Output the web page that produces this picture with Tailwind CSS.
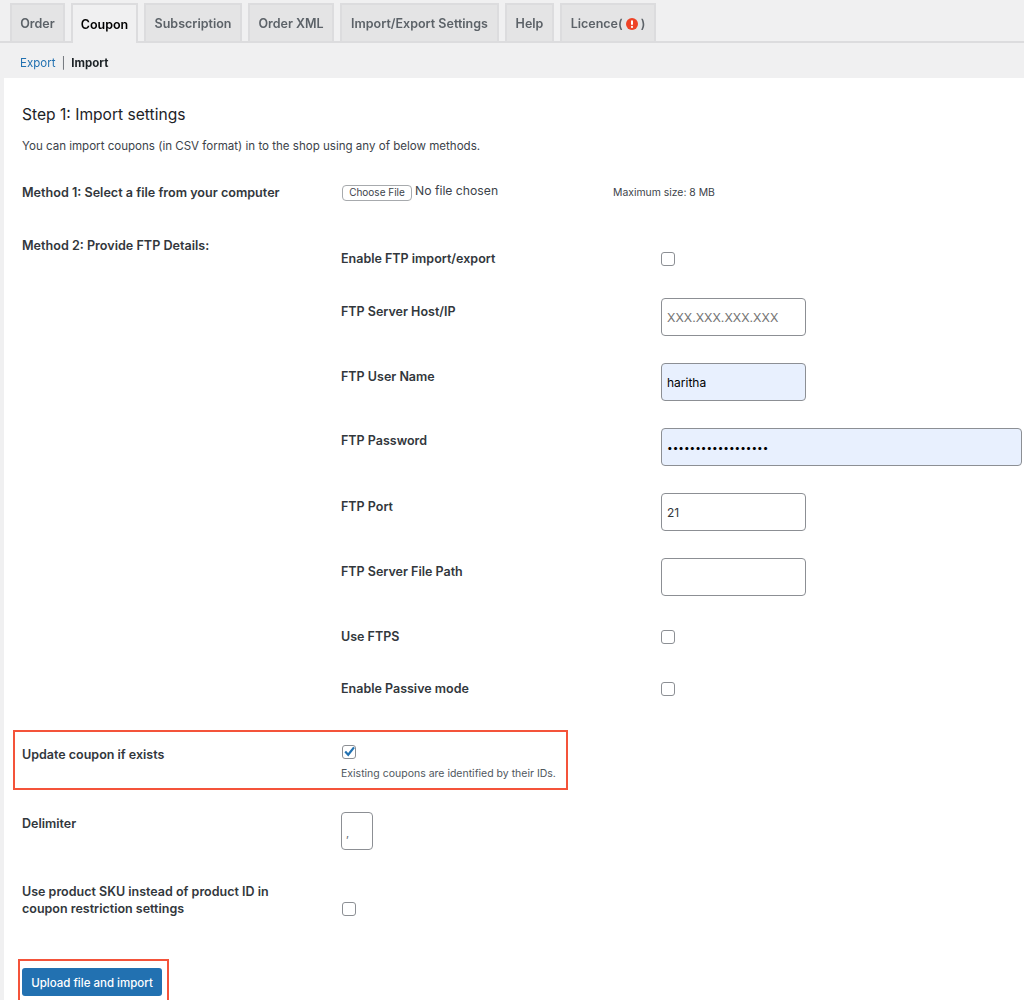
<!doctype html>
<html lang="en">
<head>
<meta charset="utf-8">
<script src="https://cdn.jsdelivr.net/npm/@tailwindcss/browser@4"></script>
<title>Import coupons</title>
</head>
<body class="bg-[#f0f0f1] font-['Inter','Liberation_Sans',sans-serif] text-[13px] text-[#32373c] h-[1000px] overflow-hidden">
 <div class="blur-[0.35px]">
  <nav class="flex items-end gap-[6px] h-[43px] pl-[10px] border-b-2 border-[#dcdcde] font-semibold leading-[20px] text-[#5c6268] text-[12.5px]">
    <a class="h-[38px] w-[55px] pt-[2px] flex items-center justify-center bg-[#e4e4e5] border-2 border-b-0 border-[#dcdcde]">Order</a>
    <a class="h-[40px] -mb-[2px] w-[67px] pt-[2px] flex items-center justify-center bg-[#f0f0f1] border-2 border-b-0 border-[#dcdcde] text-black">Coupon</a>
    <a class="h-[38px] w-[98px] pt-[2px] flex items-center justify-center bg-[#e4e4e5] border-2 border-b-0 border-[#dcdcde]">Subscription</a>
    <a class="h-[38px] w-[86px] pt-[2px] flex items-center justify-center bg-[#e4e4e5] border-2 border-b-0 border-[#dcdcde]">Order XML</a>
    <a class="h-[38px] w-[159px] pt-[2px] flex items-center justify-center bg-[#e4e4e5] border-2 border-b-0 border-[#dcdcde]">Import/Export Settings</a>
    <a class="h-[38px] w-[49px] pt-[2px] flex items-center justify-center bg-[#e4e4e5] border-2 border-b-0 border-[#dcdcde]">Help</a>
    <a class="h-[38px] w-[96px] pt-[2px] flex items-center justify-center gap-[3px] bg-[#e4e4e5] border-2 border-b-0 border-[#dcdcde]">
      <span>Licence(</span>
      <svg class="w-[12px] h-[12px]" viewBox="0 0 12 12"><circle cx="6" cy="6" r="6" fill="#ee4226"/><rect x="5" y="2.3" width="2" height="4.8" rx="1" fill="#fff"/><circle cx="6" cy="8.9" r="1.1" fill="#fff"/></svg>
      <span>)</span>
    </a>
  </nav>

  <div class="flex items-center h-[35px] pt-[4px] pl-[20px] text-[11.5px] leading-[20px]">
    <a class="text-[#2271b1]">Export</a>
    <span class="mx-[6px] text-[#646970]">|</span>
    <strong class="font-bold text-[#1d2327]">Import</strong>
  </div>

  <main class="relative ml-[4px] pl-[18px] bg-white h-[922px]">
    <h2 class="pt-[25px] text-[15.6px] leading-[24px] font-normal text-[#1d2327]">Step 1: Import settings</h2>
    <p class="mt-[9px] text-[11.55px] leading-[20px] text-[#3c434a]">You can import coupons (in CSV format) in to the shop using any of below methods.</p>

    <section class="mt-[26px] grid grid-cols-[319px_1fr] h-[20px]">
      <label class="pt-[1px] font-semibold text-[12.6px] leading-[20px]">Method 1: Select a file from your computer</label>
      <div class="flex items-center">
        <button class="ml-[1px] w-[70px] h-[16px] flex items-center justify-center rounded-[4px] border border-[#a7aaad] bg-white text-[10px] text-[#3c434a]">Choose File</button>
        <span class="ml-[3px] -mt-[2px] text-[12.2px] text-[#3c434a]">No file chosen</span>
        <span class="ml-[115px] mt-[1px] text-[10.4px] text-[#3c434a]">Maximum size: 8 MB</span>
      </div>
    </section>

    <section class="mt-[33px] grid grid-cols-[319px_1fr]">
      <label class="pt-[1px] font-semibold text-[12.6px] leading-[20px]">Method 2: Provide FTP Details:</label>
      <div class="pt-[13px]">
        <div class="grid grid-cols-[320px_1fr] h-[20px]">
          <label class="pt-[1px] font-semibold text-[12.5px] leading-[20px]">Enable FTP import/export</label>
          <input type="checkbox" class="appearance-none w-[14px] h-[14px] mt-[4px] rounded-[3px] border border-[#8c8f94] bg-white">
        </div>
        <div class="grid grid-cols-[320px_1fr] h-[38px] mt-[30px]">
          <label class="pt-[4px] font-semibold text-[12.5px] leading-[20px]">FTP Server Host/IP</label>
          <input type="text" placeholder="XXX.XXX.XXX.XXX" class="w-[145px] h-[38px] px-[5px] rounded-[4px] border border-[#8c8f94] bg-white text-[12.3px] placeholder:text-[#757575]">
        </div>
        <div class="grid grid-cols-[320px_1fr] h-[38px] mt-[27px]">
          <label class="pt-[4px] font-semibold text-[12.5px] leading-[20px]">FTP User Name</label>
          <input type="text" value="haritha" class="w-[145px] h-[38px] px-[5px] rounded-[4px] border border-[#8c8f94] bg-[#e8f0fe] text-[12px] text-black">
        </div>
        <div class="grid grid-cols-[320px_1fr] h-[38px] mt-[27px]">
          <label class="pt-[3px] font-semibold text-[12.5px] leading-[20px]">FTP Password</label>
          <input type="password" value="aaaaaaaaaaaaaaaaaa" class="w-[361px] h-[38px] px-[5px] rounded-[4px] border border-[#8c8f94] bg-[#e8f0fe] text-[10px] text-black">
        </div>
        <div class="grid grid-cols-[320px_1fr] h-[38px] mt-[27px]">
          <label class="pt-[4px] font-semibold text-[12.5px] leading-[20px]">FTP Port</label>
          <input type="text" value="21" class="w-[145px] h-[38px] px-[5px] rounded-[4px] border border-[#8c8f94] bg-white text-[12px] text-[#32373c]">
        </div>
        <div class="grid grid-cols-[320px_1fr] h-[38px] mt-[27px]">
          <label class="pt-[4px] font-semibold text-[12.5px] leading-[20px]">FTP Server File Path</label>
          <input type="text" class="w-[145px] h-[38px] px-[5px] rounded-[4px] border border-[#8c8f94] bg-white text-[12px]">
        </div>
        <div class="grid grid-cols-[320px_1fr] h-[20px] mt-[30px]">
          <label class="pt-[1px] font-semibold text-[12.5px] leading-[20px]">Use FTPS</label>
          <input type="checkbox" class="appearance-none w-[14px] h-[14px] mt-[4px] rounded-[3px] border border-[#8c8f94] bg-white">
        </div>
        <div class="grid grid-cols-[320px_1fr] h-[20px] mt-[32px]">
          <label class="pt-[1px] font-semibold text-[12.5px] leading-[20px]">Enable Passive mode</label>
          <input type="checkbox" class="appearance-none w-[14px] h-[14px] mt-[4px] rounded-[3px] border border-[#8c8f94] bg-white">
        </div>
      </div>
    </section>

    <section class="relative mt-[46px] grid grid-cols-[319px_1fr] h-[39px]">
      <div class="absolute -left-[9px] -top-[14px] w-[555px] h-[60px] border-2 border-[#f4533a] pointer-events-none"></div>
      <label class="pt-[1px] font-semibold text-[12.5px] leading-[20px]">Update coupon if exists</label>
      <div>
        <div class="relative w-[14px] h-[14px] ml-[1px] mt-[1px] rounded-[3px] border border-[#8c8f94] bg-white">
          <svg class="absolute -left-[1px] -top-[2px] w-[15px] h-[15px]" viewBox="0 0 15 15" fill="none"><path d="M3.2 7.6 L6.2 10.8 L12 3.4" stroke="#2271b1" stroke-width="2.2"/></svg>
        </div>
        <p class="mt-[7px] text-[10.5px] leading-[16px] text-[#50575e]">Existing coupons are identified by their IDs.</p>
      </div>
    </section>

    <section class="mt-[29px] grid grid-cols-[319px_1fr] h-[38px]">
      <label class="pt-[2px] font-semibold text-[12.5px] leading-[20px]">Delimiter</label>
      <input type="text" value="," class="w-[32px] h-[38px] px-[4px] pt-[3px] rounded-[4px] border border-[#8c8f94] bg-white text-[11px] text-[#646970]">
    </section>

    <section class="mt-[32px] grid grid-cols-[319px_1fr] h-[34px]">
      <label class="pt-[1px] font-semibold text-[12.5px] leading-[17px]">Use product SKU instead of product ID in<br>coupon restriction settings</label>
      <input type="checkbox" class="appearance-none w-[14px] h-[14px] ml-[1px] mt-[20px] rounded-[3px] border border-[#8c8f94] bg-white">
    </section>

    <div class="relative mt-[52px] w-fit">
      <div class="absolute -left-[4px] -top-[9px] w-[151px] h-[50px] border-2 border-[#f4533a] pointer-events-none"></div>
      <button class="w-[140px] h-[28px] pt-[4px] rounded-[3px] bg-[#2271b1] text-white text-[11.5px] font-medium">Upload file and import</button>
    </div>
  </main>
 </div>
</body>
</html>
